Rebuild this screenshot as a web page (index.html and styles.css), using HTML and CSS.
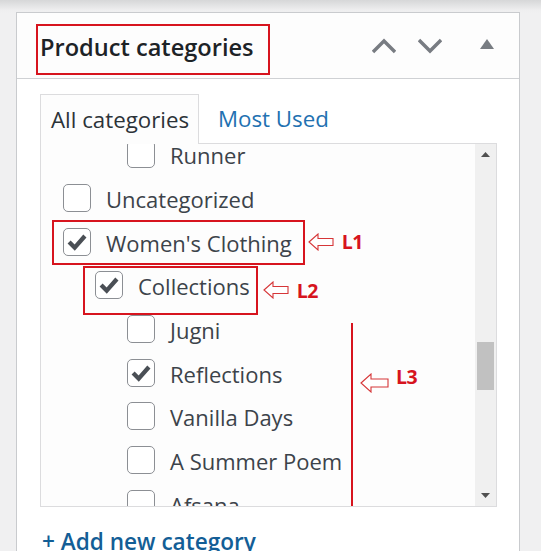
FILE: index.html
```html
<!DOCTYPE html>
<html lang="en">
<head>
<meta charset="utf-8">
<title>Product categories</title>
<link rel="stylesheet" href="styles.css">
</head>
<body>
<div class="page">
  <div class="panel">
    <div class="panel-header">
      <div class="title-box"><h2 class="title">Product categories</h2></div>
      <div class="controls">
        <svg class="chev" width="24" height="24" viewBox="0 0 24 24"><path d="M1 18 L12 7 L23 18" fill="none" stroke="#787c82" stroke-width="3.4"/></svg>
        <svg class="chev chev-down" width="24" height="24" viewBox="0 0 24 24"><path d="M1 6 L12 17 L23 6" fill="none" stroke="#787c82" stroke-width="3.4"/></svg>
        <svg class="tri" width="14" height="10" viewBox="0 0 14 10"><path d="M0 10 L7 0 L14 10 Z" fill="#787c82"/></svg>
      </div>
    </div>
    <div class="panel-body">
      <div class="tabs">
        <div class="tab tab-active">All categories</div>
        <div class="tab tab-link">Most Used</div>
      </div>
      <div class="listbox">
        <div class="list-viewport">
          <div class="list">
            <div class="row lvl2"><span class="cb"></span><span class="label">Runner</span></div>
            <div class="row lvl0"><span class="cb"></span><span class="label">Uncategorized</span></div>
            <div class="row lvl0">
              <span class="item annot-l1"><span class="cb checked"><svg viewBox="0 0 28 28"><path d="M5.5 14 L11.5 20 L22.5 7.5" fill="none" stroke="#4a4f55" stroke-width="4.6"/></svg></span><span class="label">Women's Clothing</span></span>
              <svg class="arrow arrow-l1" width="26" height="18" viewBox="0 0 26 18"><path d="M1 9 L10 1 L10 5.5 L25 5.5 L25 12.5 L10 12.5 L10 17 Z" fill="#fff" stroke="#d63638" stroke-width="1.1"/></svg>
              <span class="tag">L1</span>
            </div>
            <div class="row lvl1">
              <span class="item annot-l2"><span class="cb checked"><svg viewBox="0 0 28 28"><path d="M5.5 14 L11.5 20 L22.5 7.5" fill="none" stroke="#4a4f55" stroke-width="4.6"/></svg></span><span class="label">Collections</span></span>
              <svg class="arrow arrow-l2" width="26" height="18" viewBox="0 0 26 18"><path d="M1 9 L10 1 L10 5.5 L25 5.5 L25 12.5 L10 12.5 L10 17 Z" fill="#fff" stroke="#d63638" stroke-width="1.1"/></svg>
              <span class="tag">L2</span>
            </div>
            <div class="row lvl2"><span class="cb"></span><span class="label">Jugni</span></div>
            <div class="row lvl2"><span class="cb checked"><svg viewBox="0 0 28 28"><path d="M5.5 14 L11.5 20 L22.5 7.5" fill="none" stroke="#4a4f55" stroke-width="4.6"/></svg></span><span class="label">Reflections</span></div>
            <div class="row lvl2"><span class="cb"></span><span class="label">Vanilla Days</span></div>
            <div class="row lvl2"><span class="cb"></span><span class="label">A Summer Poem</span></div>
            <div class="row lvl2"><span class="cb"></span><span class="label">Afsana</span></div>
            <div class="l3-line"></div>
            <svg class="arrow arrow-l3" width="29" height="20" viewBox="0 0 29 20"><path d="M1 10 L11 1 L11 6 L28 6 L28 14 L11 14 L11 19 Z" fill="#fff" stroke="#d63638" stroke-width="1.1"/></svg>
            <span class="tag tag-l3">L3</span>
          </div>
        </div>
        <div class="scrollbar">
          <svg class="sb-arrow" width="9" height="5" viewBox="0 0 9 5"><path d="M0 5 L4.5 0 L9 5 Z" fill="#505050"/></svg>
          <div class="sb-track"><div class="sb-thumb"></div></div>
          <svg class="sb-arrow" width="9" height="5" viewBox="0 0 9 5"><path d="M0 0 L4.5 5 L9 0 Z" fill="#505050"/></svg>
        </div>
      </div>
      <div class="add-new">+ Add new category</div>
    </div>
  </div>
</div>
</body>
</html>
```

FILE: styles.css
```css
* { box-sizing: border-box; }
html, body { margin: 0; padding: 0; }
body {
  background: linear-gradient(#d6d7d8 0px, #eeeeef 10px, #f0f0f1 14px);
  font-family: "Open Sans", "Noto Sans", sans-serif;
  height: 551px;
  overflow: hidden;
}
.page {
  padding: 12px 21px 0 16px;
}
.panel {
  width: 504px;
  height: 560px;
  background: #fff;
  border: 1px solid #c9cbce;
  border-bottom: none;
}
.panel-header {
  height: 66px;
  display: flex;
  align-items: center;
  padding: 0 25px 0 19px;
  border-bottom: 1px solid #cfd1d4;
  background: #fdfdfd;
}
.title-box {
  align-self: flex-start;
  margin-top: 11px;
  width: 234px;
  height: 51px;
  border: 2px solid #d7141e;
  display: flex;
  align-items: center;
  padding: 0 0 5px 2px;
}
.title {
  margin: 0;
  font-size: 23.6px;
  font-weight: 600;
  color: #1d2327;
  white-space: nowrap;
}
.controls {
  margin-left: auto;
  display: flex;
  align-items: center;
}
.chev { display: block; }
.chev-down { margin-left: 22px; }
.tri { display: block; margin-left: 38px; margin-top: -4px; }

.panel-body {
  padding: 15px 0 0 23px;
}
.tabs {
  display: flex;
  align-items: flex-end;
  height: 49px;
}
.tab {
  font-size: 22.3px;
  height: 49px;
  display: flex;
  align-items: center;
  white-space: nowrap;
}
.tab-active {
  width: 159px;
  padding-left: 10px;
  border: 1px solid #dcdcde;
  border-bottom: none;
  background: #fdfdfd;
  color: #2c3338;
  position: relative;
  margin-bottom: -1px;
  height: 50px;
}
.tab-link {
  margin-left: 19px;
  color: #2271b1;
}
.listbox {
  width: 457px;
  height: 364px;
  border: 1px solid #dcdcde;
  background: #fdfdfd;
  display: flex;
}
.list-viewport {
  flex: 1;
  overflow: hidden;
}
.list {
  position: relative;
  margin-top: -11.5px;
}
.row {
  height: 43.67px;
  display: flex;
  align-items: center;
  font-size: 22px;
  color: #3c434a;
  white-space: nowrap;
}
.lvl0 { padding-left: 22px; }
.lvl1 { padding-left: 54px; }
.lvl2 { padding-left: 86px; }
.item {
  display: flex;
  align-items: center;
  position: relative;
}
.cb {
  flex: none;
  width: 28px;
  height: 28px;
  border: 1.5px solid #8c8f94;
  border-radius: 5px;
  background: #fff;
  display: flex;
  align-items: center;
  justify-content: center;
}
.cb svg { width: 26px; height: 26px; display: block; }
.label { margin-left: 15px; padding-top: 2px; }
.annot-l1::after,
.annot-l2::after {
  content: "";
  position: absolute;
  border: 2px solid #d7141e;
}
.annot-l1::after { left: -11px; right: -13px; top: -6px; bottom: -7px; }
.annot-l2::after { left: -12px; right: -8px; top: -3px; bottom: -14px; }
.arrow { display: block; flex: none; }
.arrow-l1 { margin-left: 16px; }
.arrow-l2 { margin-left: 13px; margin-top: 10px; }
.tag {
  color: #d7141e;
  font-weight: 700;
  font-size: 19.5px;
  letter-spacing: -0.5px;
  margin-left: 8px;
}
.arrow-l2 + .tag { margin-top: 10px; }
.l3-line {
  position: absolute;
  left: 310px;
  top: 190px;
  width: 2px;
  height: 200px;
  background: #d7141e;
}
.arrow-l3 {
  position: absolute;
  left: 319px;
  top: 240.5px;
}
.tag-l3 {
  position: absolute;
  left: 355px;
  top: 230px;
  margin: 0;
}
.scrollbar {
  width: 21px;
  background: #f0f0f0;
  display: flex;
  flex-direction: column;
  align-items: center;
  padding: 8px 0 8px;
}
.sb-arrow { display: block; flex: none; }
.sb-track {
  flex: 1;
  width: 100%;
  padding: 185px 2px 0 2px;
}
.sb-thumb {
  height: 48px;
  background: #c1c1c1;
}
.add-new {
  margin-top: 20px;
  margin-left: 2px;
  font-size: 22.6px;
  font-weight: 600;
  color: #135e96;
  line-height: 30px;
  white-space: nowrap;
}
```
